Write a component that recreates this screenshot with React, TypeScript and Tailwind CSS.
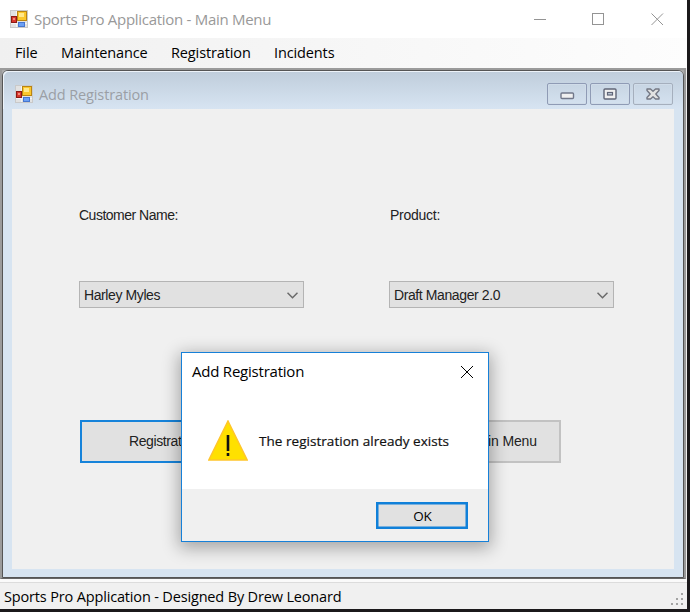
import type { ReactNode } from 'react';

function AppIcon() {
  return (
    <svg width="18" height="18" viewBox="0 0 18 18" className="shrink-0">
      <rect x="0.5" y="0.5" width="17" height="17" fill="#e2e2e2" stroke="#c9c9c9" />
      <path d="M6.5 1v16M1 13.5h16" stroke="#f4f4f4" />
      <rect x="1.5" y="6.5" width="5" height="6" fill="#d8362c" stroke="#8d1a14" />
      <rect x="3" y="8" width="2" height="2" fill="#f58a7c" />
      <rect x="7.5" y="1.5" width="9" height="9" fill="#fbc72c" stroke="#b98512" />
      <rect x="9" y="3" width="5" height="4" fill="#ffe88c" />
      <rect x="8.5" y="12.5" width="6" height="4" fill="#6ba0f5" stroke="#4676cf" />
    </svg>
  );
}

function Chevron() {
  return (
    <svg width="11" height="7" viewBox="0 0 11 7" className="mr-[5px]">
      <path d="M0.5 0.8 5.5 5.8 10.5 0.8" fill="none" stroke="#6a6a6a" strokeWidth="1.5" />
    </svg>
  );
}

function Combo({ children }: { children: ReactNode }) {
  return (
    <div className="flex h-[27px] w-[225px] items-center justify-between border border-[#b4b4b4] bg-[#e1e1e1] pl-1 pt-px">
      <span className="whitespace-nowrap">{children}</span>
      <Chevron />
    </div>
  );
}

function ChildButton({ children, faded }: { children: ReactNode; faded?: boolean }) {
  return (
    <div
      className={`flex h-[22px] w-10 items-center justify-center rounded-[2px] border shadow-[inset_0_0_0_1px_#d0dce9] ${
        faded ? 'border-[#a5afbd]' : 'border-[#8f9bb5]'
      }`}
    >
      {children}
    </div>
  );
}

function MessageBox() {
  return (
    <div className="absolute left-[181px] top-[352px] flex h-[190px] w-[308px] flex-col border border-[#1680d8] bg-white text-black shadow-[0_4px_16px_2px_rgba(0,0,0,0.32)]">
      <div className="flex h-[38px] items-center justify-between pb-[2px] pl-[10px] pr-[15px]">
        <span className="whitespace-nowrap text-[15px] tracking-[-0.22px]">Add Registration</span>
        <svg width="12" height="12" viewBox="0 0 12 12" className="mt-px">
          <path d="M0 0l12 12M12 0l-12 12" stroke="#000" strokeWidth="1" />
        </svg>
      </div>
      <div className="flex h-[98px] items-center pl-[26px]">
        <svg width="40" height="41" viewBox="0 0 40 41" className="mt-px">
          <path d="M20 1 39.2 40H0.8Z" fill="#ffe000" stroke="#ffc52b" strokeWidth="1.5" />
          <path d="M18.7 15h2.6v16h-2.6zM18.7 33h2.6v3h-2.6z" fill="#111" />
        </svg>
        <span className="ml-[11px] mt-[3px] whitespace-nowrap text-[13.5px] tracking-[0.04px] text-[#111] [-webkit-text-stroke:0.2px_#111]">
          The registration already exists
        </span>
      </div>
      <div className="flex grow justify-end bg-[#f0f0f0] pr-5 pt-[13px]">
        <div className="flex h-[27px] w-[92px] items-center justify-center border-2 border-[#1080d9] bg-[#e1e1e1] pl-px pt-[2px] text-[13.5px] tracking-[-0.2px] shadow-[inset_0_0_0_0.5px_#1080d9]">
          OK
        </div>
      </div>
    </div>
  );
}

export default function App() {
  return (
    <div className="relative h-[612px] w-[690px] overflow-hidden bg-[#1b191b] font-['Open_Sans',sans-serif] text-[14px] text-black">
      <div className="flex h-[609px] w-[687px] flex-col bg-[#f0f0f0]">
        <header className="flex h-[38px] items-center bg-white pl-[10px]">
          <AppIcon />
          <span className="ml-[6px] grow whitespace-nowrap text-[15px] tracking-[-0.29px] text-[#999]">
            Sports Pro Application - Main Menu
          </span>
          <svg width="130" height="13" viewBox="0 0 130 13" className="mr-[23px]">
            <g fill="none" stroke="#949494">
              <path d="M0 6.5h12" />
              <rect x="58.5" y="0.5" width="11" height="11" />
              <path d="M117.5 0.5l11.5 11.5M129 0.5l-11.5 11.5" />
            </g>
          </svg>
        </header>
        <nav className="flex h-[30px] items-center bg-linear-to-r from-[#f0f0f0] to-[#fdfdfd] pl-[15px] text-[14.5px] tracking-[-0.12px]">
          <span className="w-[46px]">File</span>
          <span className="w-[110px]">Maintenance</span>
          <span className="w-[103px]">Registration</span>
          <span>Incidents</span>
        </nav>
        <div className="mr-px h-[511px] border-2 border-b-[1px] border-[#9b9b9b] border-r-[#999] border-b-[#666] bg-[#aaa]">
          <div className="flex h-full flex-col rounded-t-[6px] border border-[#555] bg-[#d7e4f1]">
            <div className="flex h-[38px] items-center rounded-t-[5px] bg-linear-to-b from-[#bfcddb] to-[#d7e4f2] pl-3 pt-[8px] shadow-[inset_1px_1px_0_#edf3f9]">
              <AppIcon />
              <span className="ml-[6px] grow whitespace-nowrap pt-[2px] text-[14.5px] tracking-[-0.12px] text-[#9b9fa5]">Add Registration</span>
              <div className="mr-[10px] flex gap-[3px]">
                <ChildButton>
                  <svg width="15" height="8" className="mt-[3px]">
                    <rect x="1" y="1" width="12.5" height="5.5" rx="1" fill="#f0f0f0" stroke="#72788a" strokeWidth="1.4" />
                  </svg>
                </ChildButton>
                <ChildButton>
                  <svg width="14" height="12">
                    <rect x="1" y="1" width="12" height="10" rx="1" fill="#f0f0f0" stroke="#606577" strokeWidth="1.4" />
                    <rect x="4.5" y="4.5" width="5" height="2.5" fill="#c4d0de" stroke="#606577" strokeWidth="1.2" />
                  </svg>
                </ChildButton>
                <ChildButton faded>
                  <svg width="16" height="12" viewBox="0 0 16 12">
                    <path
                      d="M2 1h3.5L8 3.2 10.5 1H14v1.6L10.8 6 14 9.4V11h-3.5L8 8.8 5.5 11H2V9.4L5.2 6 2 2.6Z"
                      fill="#e2e2e2"
                      stroke="#747884"
                      strokeWidth="1.4"
                      strokeLinejoin="round"
                    />
                  </svg>
                </ChildButton>
              </div>
            </div>
            <main className="mx-[9px] mb-[8px] grow bg-[#f0f0f0] font-['Liberation_Sans',Arial,sans-serif] text-[14px] tracking-[-0.4px] text-[#222]">
              <div className="flex pl-[67px] pt-[97px]">
                <span className="w-[311px] leading-[18px] tracking-[-0.5px]">Customer Name:</span>
                <span className="leading-[18px] tracking-[-0.25px]">Product:</span>
              </div>
              <div className="mt-[57px] flex gap-[85px] pl-[67px]">
                <Combo>Harley Myles</Combo>
                <Combo>Draft Manager 2.0</Combo>
              </div>
              <div className="mt-[112px] flex gap-[90px] pl-[68px]">
                <div className="flex h-[43px] w-[195px] items-center border-2 border-[#1683da] bg-[#e1e1e1] pl-[47px]">
                  Registration
                </div>
                <div className="flex h-[43px] w-[196px] items-center justify-end border-2 border-[#c2c2c2] bg-[#e1e1e1] pr-[22px] tracking-[-0.1px]">
                  Main Menu
                </div>
              </div>
            </main>
          </div>
        </div>
        <footer className="flex grow items-center justify-between border-t-[3px] border-[#fafafa] pl-1 pr-[3px] shadow-[inset_0_1px_0_#dcdcdc]">
          <span className="whitespace-nowrap pt-[2px] text-[14.5px] tracking-[-0.16px]">Sports Pro Application - Designed By Drew Leonard</span>
          <svg width="14" height="14" className="mt-[7px]" fill="#a3a3a3">
            <path d="M11 1h2v2h-2zM6 6h2v2H6zM11 6h2v2h-2zM1 11h2v2H1zM6 11h2v2H6zM11 11h2v2h-2z" />
          </svg>
        </footer>
      </div>
      <MessageBox />
    </div>
  );
}
